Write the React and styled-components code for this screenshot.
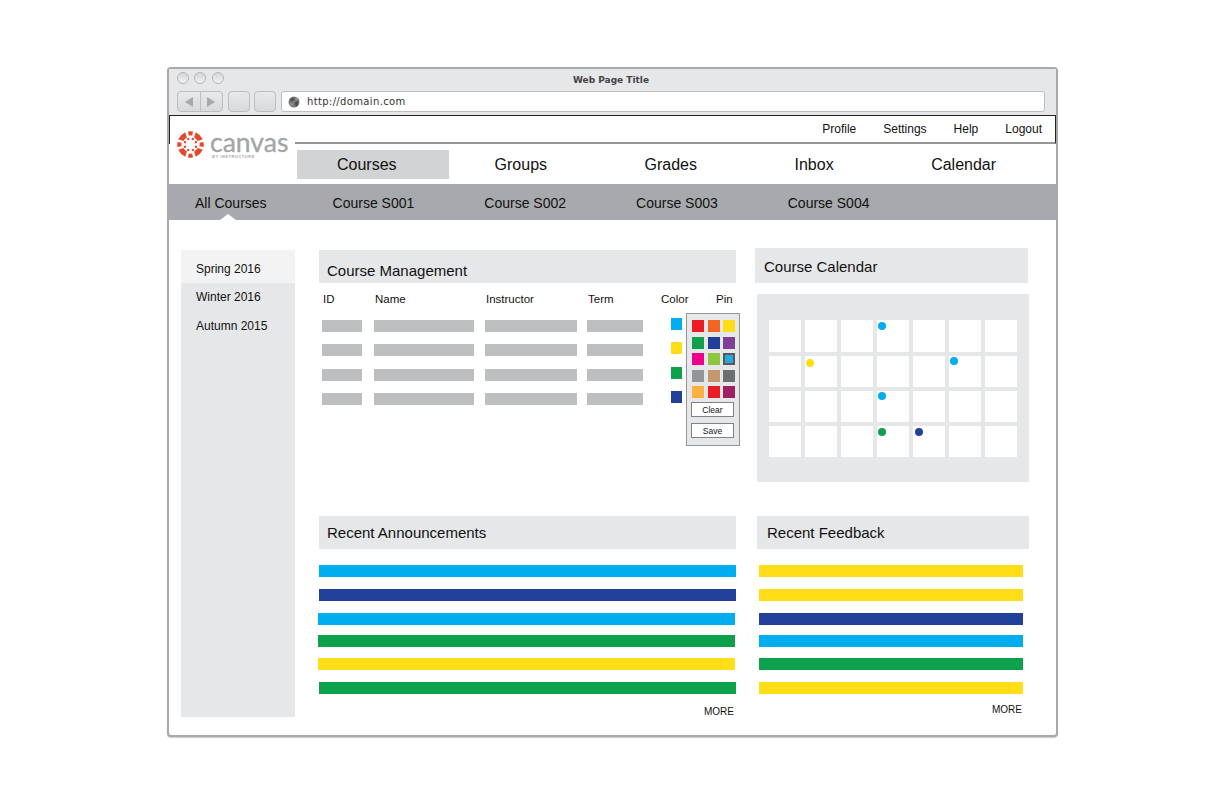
import React from 'react';
import styled, { createGlobalStyle } from 'styled-components';

const BLUE = '#00aeef';
const NAVY = '#21409a';
const GREEN = '#0ca14a';
const YELLOW = '#ffde17';

const GlobalStyle = createGlobalStyle`
  html, body {
    margin: 0;
    background: #fff;
  }

  body {
    font-family: "Liberation Sans", Arial, sans-serif;
    color: #111;
  }
`;

const Page = styled.div`
  width: 1224px;
  height: 793px;
  padding: 67px 0 0 167px;
  box-sizing: border-box;
  overflow: hidden;
`;

const Window = styled.div`
  width: 891px;
  height: 670px;
  box-sizing: border-box;
  border: 2px solid #a7a9ac;
  border-radius: 4px;
  background: #fff;
  box-shadow: 0 1px 1px #ccc;
`;

const Chrome = styled.div`
  position: relative;
  height: 46px;
  background: #e6e7e8;
`;

const Lights = styled.div`
  position: absolute;
  top: 3px;
  left: 8px;
  display: flex;
  gap: 5.3px;
`;

const Light = styled.span`
  width: 12px;
  height: 12px;
  box-sizing: border-box;
  border: 1px solid #b4b6b9;
  border-radius: 50%;
  background: linear-gradient(#d5d6d8, #f1f2f2);
`;

const PageTitle = styled.div`
  padding: 6px 3px 0 0;
  height: 22px;
  box-sizing: border-box;
  text-align: center;
  font-family: "DejaVu Sans", sans-serif;
  font-size: 9px;
  font-weight: 700;
  color: #444;
`;

const ToolRow = styled.div`
  display: flex;
  align-items: stretch;
  height: 21px;
  padding: 0 11px 0 8px;
`;

const ToolButton = styled.div`
  display: flex;
  align-items: center;
  justify-content: center;
  width: ${(p) => p.$width || 22}px;
  margin-right: 4px;
  box-sizing: border-box;
  border: 1px solid #bcbec0;
  border-radius: 4px;
  background: linear-gradient(#e8e9ea, #d9dadc);
`;

const NavPair = styled(ToolButton)`
  margin-right: 5px;
`;

const NavHalf = styled.span`
  display: flex;
  flex: 1;
  align-self: stretch;
  align-items: center;
  justify-content: center;
  border-left: ${(p) => (p.$divided ? '1px solid #bcbec0' : 'none')};
`;

const Arrow = styled.span`
  width: 0;
  height: 0;
  border-top: 5px solid transparent;
  border-bottom: 5px solid transparent;
  border-${(p) => (p.$back ? 'right' : 'left')}: 8px solid #a7a9ac;
`;

const AddressBar = styled.div`
  display: flex;
  flex: 1;
  align-items: center;
  gap: 7px;
  margin-left: 1px;
  padding-left: 6px;
  box-sizing: border-box;
  border: 1px solid #bcbec0;
  border-radius: 3px;
  background: #fff;
  font-family: "DejaVu Sans", sans-serif;
  font-size: 10px;
  letter-spacing: 0.35px;
  color: #333;
`;

const TopArea = styled.div`
  display: flex;
  height: 69px;
  box-sizing: border-box;
  border-top: 1px solid #222;
`;

const LogoBlock = styled.div`
  display: flex;
  flex: none;
  width: 126px;
  padding: 15px 0 0 8px;
  box-sizing: border-box;
  gap: 6px;
  background: linear-gradient(#222, #222) left top / 1px 28px no-repeat;
`;

const Wordmark = styled.div`
  display: flex;
  flex-direction: column;
`;

const WordmarkName = styled.span`
  font-family: Lato, "Open Sans", sans-serif;
  font-size: 26.5px;
  line-height: 22px;
  color: #a2a4a7;
  -webkit-text-stroke: 0.3px #a2a4a7;
`;

const WordmarkSub = styled.span`
  margin: 1px 0 0 2px;
  font-size: 4px;
  line-height: 5px;
  font-weight: 700;
  letter-spacing: 0.55px;
  color: #a7a9ac;
`;

const TopColumn = styled.div`
  flex: 1;
  min-width: 0;
  display: flex;
  flex-direction: column;
`;

const UtilityBar = styled.div`
  display: flex;
  justify-content: flex-end;
  align-items: center;
  gap: 27px;
  height: 28px;
  padding-right: 13px;
  box-sizing: border-box;
  border-right: 1px solid #222;
  border-bottom: 2px solid #939598;
  font-size: 12px;
`;

const MainNav = styled.div`
  display: flex;
  height: 29px;
  margin: 6px 0 0 2px;
`;

const NavItem = styled.div`
  display: flex;
  align-items: center;
  flex: none;
  font-size: 16px;
  margin-right: ${(p) => (p.$active ? 46 : 97.5)}px;
  padding: ${(p) => (p.$active ? '0 52px 0 40px' : '0')};
  background: ${(p) => (p.$active ? '#d1d3d4' : 'transparent')};
`;

const SubNav = styled.div`
  display: flex;
  align-items: center;
  height: 36px;
  padding: 2px 0 0 26px;
  box-sizing: border-box;
  background: #a7a9ac;
  font-size: 14px;
`;

const SubItem = styled.div`
  position: relative;
  margin-right: ${(p) => (p.$active ? 66 : 70)}px;

  &::after {
    content: '';
    display: ${(p) => (p.$active ? 'block' : 'none')};
    position: absolute;
    left: 25px;
    bottom: -9px;
    border-left: 8px solid transparent;
    border-right: 8px solid transparent;
    border-bottom: 6px solid #fff;
  }
`;

const Main = styled.div`
  display: flex;
  padding: 28px 0 0 12px;
`;

const Sidebar = styled.div`
  width: 114px;
  height: 467px;
  margin: 2px 24px 0 0;
  background: #e6e7e8;
  font-size: 12px;
`;

const TermItem = styled.div`
  display: flex;
  align-items: center;
  height: ${(p) => p.$height}px;
  padding: ${(p) => (p.$active ? '5px 0 0 15px' : '0 0 0 15px')};
  box-sizing: border-box;
  background: ${(p) => (p.$active ? '#f3f3f3' : 'transparent')};
`;

const Content = styled.div`
  display: flex;
  flex-direction: column;
`;

const ContentRow = styled.div`
  display: flex;
  height: ${(p) => p.$height}px;
`;

const Panel = styled.section`
  position: relative;
  width: ${(p) => p.$width}px;
  margin: ${(p) => p.$margin || '0'};
`;

const PanelHeader = styled.h2`
  display: flex;
  align-items: center;
  height: ${(p) => p.$height || 33}px;
  margin: 0;
  padding: ${(p) => p.$pad || '0 0 0 8px'};
  box-sizing: border-box;
  background: #e6e7e8;
  font-size: 15px;
  font-weight: 400;
`;

const Table = styled.div`
  display: grid;
  grid-template-columns: 52px 111px 102px 74px 55px 23px;
  grid-template-rows: 16px;
  grid-auto-rows: 12px;
  row-gap: 12.5px;
  padding: 8px 0 0 3px;
`;

const ColHead = styled.div`
  padding-left: ${(p) => (p.$flush ? 0 : 1)}px;
  font-size: 11.5px;
  line-height: 16px;
  white-space: nowrap;
`;

const Placeholder = styled.div`
  width: ${(p) => p.$width}px;
  height: 12px;
  background: #bcbec0;
`;

const RowSwatch = styled.div`
  width: 11px;
  height: 12px;
  margin: -2px 0 0 10px;
  background: ${(p) => p.$color};
`;

const PickerPopover = styled.div`
  position: absolute;
  left: 367px;
  top: 63px;
  width: 54px;
  height: 133px;
  box-sizing: border-box;
  padding: 6px 4px 0 4px;
  border: 1px solid #939598;
  background: #e6e7e8;
`;

const PickerGrid = styled.div`
  display: grid;
  grid-template-columns: repeat(3, 12px);
  column-gap: 3.5px;
  row-gap: 4.5px;
  margin-bottom: 4px;
  padding-left: 1px;
`;

const PickerSwatch = styled.div`
  height: 12px;
  box-sizing: border-box;
  background: ${(p) => p.$color};
  border: ${(p) => (p.$selected ? '2px solid #58595b' : 'none')};
`;

const PickerButton = styled.div`
  display: flex;
  align-items: center;
  justify-content: center;
  width: 43px;
  height: 15px;
  margin-bottom: 6px;
  box-sizing: border-box;
  border: 1px solid #808285;
  background: #fff;
  font-size: 8.5px;
`;

const CalendarBox = styled.div`
  width: 272px;
  height: 188px;
  margin: 11px 0 0 2px;
  padding: 26px 0 0 12px;
  box-sizing: border-box;
  background: #e6e7e8;
`;

const CalendarGrid = styled.div`
  display: grid;
  grid-template-columns: repeat(7, 32px);
  grid-template-rows: 32px 31px 31px 31px;
  gap: 4px;
`;

const DayCell = styled.div`
  position: relative;
  background: #fff;
`;

const DayDot = styled.span`
  position: absolute;
  left: ${(p) => p.$x}px;
  top: ${(p) => p.$y}px;
  width: 8px;
  height: 8px;
  border-radius: 50%;
  background: ${(p) => p.$color};
`;

const BarList = styled.div`
  display: flex;
  flex-direction: column;
  padding: ${(p) => p.$pad};
`;

const ColorBar = styled.div`
  height: 12px;
  margin-top: ${(p) => p.$gap}px;
  margin-left: ${(p) => p.$shift || 0}px;
  margin-right: ${(p) => -(p.$shift || 0)}px;
  background: ${(p) => p.$color};
`;

const More = styled.div`
  text-align: right;
  font-size: 10px;
  line-height: 12px;
  margin-top: ${(p) => p.$top}px;
  padding-right: ${(p) => p.$right}px;
`;

const Globe = () => (
  <svg width="12" height="12" viewBox="0 0 12 12">
    <circle cx="6" cy="6" r="5.5" fill="#77787b" />
    <path d="M2 3.5 L5 1.5 L6.5 3 L5 5 L3 5.5Z M7 6 L10.5 5 L10 9 L8 10.5 L7 8.5Z" fill="#4d4d4f" />
    <path d="M8 1.5 L10 3 L8.5 4Z M2 7 L4.5 8 L4 10 Z" fill="#a7a9ac" />
  </svg>
);

const OUTER_ANGLES = [0, 45, 90, 135, 180, 225, 270, 315];

const CanvasMark = () => (
  <svg width="27" height="27" viewBox="0 0 54 54" style={{ flex: 'none' }}>
    <g fill="#e4492c">
      {OUTER_ANGLES.map((a) => (
        <path
          key={a}
          transform={`rotate(${a} 27 27)`}
          d={a % 90 === 0 ? 'M22 1 Q27 0 32 1 L30.5 9 Q27 8.5 23.5 9Z' : 'M17 2 Q27 -1 37 2 L32 12 Q27 10.5 22 12Z'}
        />
      ))}
      {OUTER_ANGLES.map((a) => (
        <circle key={a} cx="27" cy="15" r="2.4" transform={`rotate(${a + 22.5} 27 27)`} />
      ))}
    </g>
  </svg>
);

const NAV = ['Courses', 'Groups', 'Grades', 'Inbox', 'Calendar'];
const COURSES = ['All Courses', 'Course S001', 'Course S002', 'Course S003', 'Course S004'];
const ROW_COLORS = [BLUE, YELLOW, GREEN, NAVY];
const PICKER = [
  '#ed1c24', '#f26522', YELLOW,
  GREEN, NAVY, '#7f3f98',
  '#ec008c', '#8dc63f', '#27aae1',
  '#939598', '#c49a6c', '#6d6e71',
  '#fbb040', '#ed1c24', '#9e1f63',
];
const DOTS = {
  3: { x: 1, y: 2, color: BLUE },
  8: { x: 1, y: 3, color: YELLOW },
  12: { x: 1, y: 1, color: BLUE },
  17: { x: 1, y: 1, color: BLUE },
  24: { x: 1, y: 2, color: GREEN },
  25: { x: 2, y: 2, color: NAVY },
};
const ANNOUNCEMENTS = [
  { color: BLUE, gap: 0 },
  { color: NAVY, gap: 12 },
  { color: BLUE, gap: 12, shift: -1 },
  { color: GREEN, gap: 10, shift: -1 },
  { color: YELLOW, gap: 11, shift: -1 },
  { color: GREEN, gap: 12 },
];
const FEEDBACK = [
  { color: YELLOW, gap: 0 },
  { color: YELLOW, gap: 12 },
  { color: NAVY, gap: 12 },
  { color: BLUE, gap: 10 },
  { color: GREEN, gap: 11 },
  { color: YELLOW, gap: 12 },
];

const App = () => (
  <Page>
    <GlobalStyle />
    <Window>
      <Chrome>
        <Lights>
          <Light />
          <Light />
          <Light />
        </Lights>
        <PageTitle>Web Page Title</PageTitle>
        <ToolRow>
          <NavPair $width={46}>
            <NavHalf><Arrow $back /></NavHalf>
            <NavHalf $divided><Arrow /></NavHalf>
          </NavPair>
          <ToolButton />
          <ToolButton />
          <AddressBar>
            <Globe />
            <span>http://domain.com</span>
          </AddressBar>
        </ToolRow>
      </Chrome>

      <TopArea>
        <LogoBlock>
          <CanvasMark />
          <Wordmark>
            <WordmarkName>canvas</WordmarkName>
            <WordmarkSub>BY INSTRUCTURE</WordmarkSub>
          </Wordmark>
        </LogoBlock>
        <TopColumn>
          <UtilityBar>
            <span>Profile</span>
            <span>Settings</span>
            <span>Help</span>
            <span>Logout</span>
          </UtilityBar>
          <MainNav>
            {NAV.map((item, i) => (
              <NavItem key={item} $active={i === 0}>{item}</NavItem>
            ))}
          </MainNav>
        </TopColumn>
      </TopArea>

      <SubNav>
        {COURSES.map((item, i) => (
          <SubItem key={item} $active={i === 0}>{item}</SubItem>
        ))}
      </SubNav>

      <Main>
        <Sidebar>
          <TermItem $active $height={33}>Spring 2016</TermItem>
          <TermItem $height={28}>Winter 2016</TermItem>
          <TermItem $height={30}>Autumn 2015</TermItem>
        </Sidebar>

        <Content>
          <ContentRow $height={268}>
            <Panel $width={417} $margin="2px 0 0 0">
              <PanelHeader $pad="8px 0 0 8px">Course Management</PanelHeader>
              <Table>
                <ColHead>ID</ColHead>
                <ColHead>Name</ColHead>
                <ColHead>Instructor</ColHead>
                <ColHead>Term</ColHead>
                <ColHead $flush>Color</ColHead>
                <ColHead $flush>Pin</ColHead>
                {ROW_COLORS.map((color) => (
                  <React.Fragment key={color}>
                    <Placeholder $width={40} />
                    <Placeholder $width={100} />
                    <Placeholder $width={92} />
                    <Placeholder $width={56} />
                    <RowSwatch $color={color} />
                    <div />
                  </React.Fragment>
                ))}
              </Table>
              <PickerPopover>
                <PickerGrid>
                  {PICKER.map((color, i) => (
                    <PickerSwatch key={i} $color={color} $selected={i === 8} />
                  ))}
                </PickerGrid>
                <PickerButton>Clear</PickerButton>
                <PickerButton>Save</PickerButton>
              </PickerPopover>
            </Panel>

            <Panel $width={273} $margin="0 0 0 19px">
              <PanelHeader $height={35} $pad="2px 0 0 9px">Course Calendar</PanelHeader>
              <CalendarBox>
                <CalendarGrid>
                  {Array.from({ length: 28 }, (_, i) => (
                    <DayCell key={i}>
                      {DOTS[i] && <DayDot $x={DOTS[i].x} $y={DOTS[i].y} $color={DOTS[i].color} />}
                    </DayCell>
                  ))}
                </CalendarGrid>
              </CalendarBox>
            </Panel>
          </ContentRow>

          <ContentRow $height={200}>
            <Panel $width={417}>
              <PanelHeader>Recent Announcements</PanelHeader>
              <BarList $pad="16px 0 0">
                {ANNOUNCEMENTS.map((bar, i) => (
                  <ColorBar key={i} $color={bar.color} $gap={bar.gap} $shift={bar.shift} />
                ))}
              </BarList>
              <More $top={12} $right={2}>MORE</More>
            </Panel>

            <Panel $width={272} $margin="0 0 0 21px">
              <PanelHeader $pad="0 0 0 10px">Recent Feedback</PanelHeader>
              <BarList $pad="16px 6px 0 2px">
                {FEEDBACK.map((bar, i) => (
                  <ColorBar key={i} $color={bar.color} $gap={bar.gap} />
                ))}
              </BarList>
              <More $top={10} $right={7}>MORE</More>
            </Panel>
          </ContentRow>
        </Content>
      </Main>
    </Window>
  </Page>
);

export default App;
